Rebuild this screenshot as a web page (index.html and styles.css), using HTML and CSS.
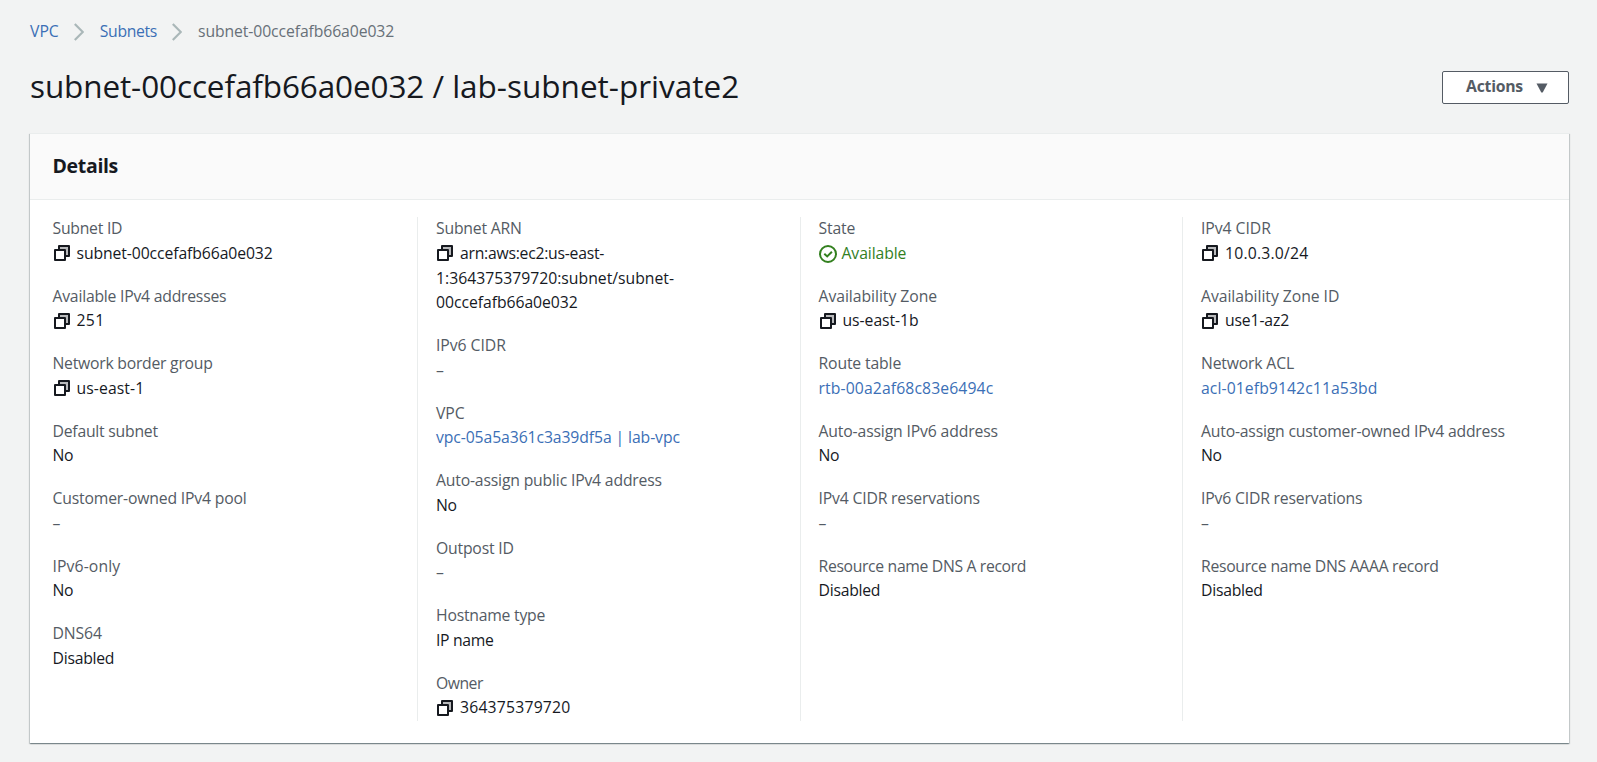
FILE: index.html
```html
<!DOCTYPE html>
<html lang="en">
<head>
<meta charset="utf-8">
<title>Subnet details</title>
<link rel="stylesheet" href="styles.css">
</head>
<body>
<svg class="sprite" aria-hidden="true">
  <symbol id="copy" viewBox="0 0 16 16"><path fill="#b9babc" d="M5 1h10v10h-3.500V4.500H5z"/><path fill="none" stroke="#16191f" stroke-width="2" stroke-linejoin="round" d="M1 5h10v10H1zM5 5V1h10v10h-4"/></symbol>
  <symbol id="check" viewBox="0 0 18 18"><path fill="none" stroke="#33801f" stroke-width="2" d="M9 1a8 8 0 1 1 0 16a8 8 0 1 1 0-16zM5.300 8.700l2.900 2.700 4.700-4.700"/></symbol>
  <symbol id="chevron" viewBox="0 0 10 18"><path fill="none" stroke="#aab7b8" stroke-width="2.200" d="M.8 1L8.800 9l-8 8"/></symbol>
</svg>

<nav class="crumbs">
  <a class="link" href="#">VPC</a>
  <svg class="chevron"><use href="#chevron"/></svg>
  <a class="link t30" href="#">Subnets</a>
  <svg class="chevron"><use href="#chevron"/></svg>
  <span class="current t10">subnet-00ccefafb66a0e032</span>
</nav>

<header class="top">
  <h1><span class="id">subnet-00ccefafb66a0e032</span> / lab-subnet-private2</h1>
  <button class="actions">Actions<svg class="caret" viewBox="0 0 12 10"><path d="M.5 .5h11L6.700 9.500H5.300z"/></svg></button>
</header>

<section class="card">
  <div class="card-head"><h2>Details</h2></div>
  <div class="grid">
    <dl class="col">
      <div><dt class="t25">Subnet ID</dt><dd class="t10"><svg class="copy"><use href="#copy"/></svg>subnet-00ccefafb66a0e032</dd></div>
      <div><dt>Available IPv4 addresses</dt><dd class="p30"><svg class="copy"><use href="#copy"/></svg>251</dd></div>
      <div><dt class="t25">Network border group</dt><dd class="p5"><svg class="copy"><use href="#copy"/></svg>us-east-1</dd></div>
      <div><dt>Default subnet</dt><dd class="t30">No</dd></div>
      <div><dt class="t18">Customer-owned IPv4 pool</dt><dd class="none">–</dd></div>
      <div><dt class="p10">IPv6-only</dt><dd class="t30">No</dd></div>
      <div><dt class="t10">DNS64</dt><dd class="t25">Disabled</dd></div>
    </dl>
    <dl class="col">
      <div><dt class="t20">Subnet ARN</dt><dd><span class="t25"><svg class="copy"><use href="#copy"/></svg>arn:aws:ec2:us-east-</span><br>1:364375379720:subnet/subnet-<br><span class="t5">00ccefafb66a0e032</span></dd></div>
      <div><dt class="t5">IPv6 CIDR</dt><dd class="none">–</dd></div>
      <div><dt class="t5">VPC</dt><dd class="t10"><a class="link" href="#">vpc-05a5a361c3a39df5a | lab-vpc</a></dd></div>
      <div><dt class="t18">Auto-assign public IPv4 address</dt><dd class="t30">No</dd></div>
      <div><dt class="t20">Outpost ID</dt><dd class="none">–</dd></div>
      <div><dt>Hostname type</dt><dd class="t30">IP name</dd></div>
      <div><dt class="t50">Owner</dt><dd class="p18"><svg class="copy"><use href="#copy"/></svg>364375379720</dd></div>
    </dl>
    <dl class="col">
      <div><dt class="t15">State</dt><dd class="ok t10"><svg class="check"><use href="#check"/></svg>Available</dd></div>
      <div><dt class="t5">Availability Zone</dt><dd class="t5"><svg class="copy"><use href="#copy"/></svg>us-east-1b</dd></div>
      <div><dt class="t15">Route table</dt><dd class="p10"><a class="link" href="#">rtb-00a2af68c83e6494c</a></dd></div>
      <div><dt class="t15">Auto-assign IPv6 address</dt><dd class="t30">No</dd></div>
      <div><dt class="t18">IPv4 CIDR reservations</dt><dd class="none">–</dd></div>
      <div><dt class="t30">Resource name DNS A record</dt><dd class="t25">Disabled</dd></div>
    </dl>
    <dl class="col">
      <div><dt class="t5">IPv4 CIDR</dt><dd class="p18"><svg class="copy"><use href="#copy"/></svg>10.0.3.0/24</dd></div>
      <div><dt class="t5">Availability Zone ID</dt><dd class="t15"><svg class="copy"><use href="#copy"/></svg>use1-az2</dd></div>
      <div><dt class="t18">Network ACL</dt><dd class="p5"><a class="link" href="#">acl-01efb9142c11a53bd</a></dd></div>
      <div><dt class="t20">Auto-assign customer-owned IPv4 address</dt><dd class="t30">No</dd></div>
      <div><dt class="t18">IPv6 CIDR reservations</dt><dd class="none">–</dd></div>
      <div><dt class="t28">Resource name DNS AAAA record</dt><dd class="t25">Disabled</dd></div>
    </dl>
  </div>
</section>
</body>
</html>
```
FILE: styles.css
```css
* { box-sizing: border-box; }

body {
  margin: 0;
  padding: 19px 28px 0 30px;
  height: 762px;
  overflow: hidden;
  background: #f2f3f3;
  color: #16191f;
  font: 15.75px/24.75px "Open Sans", "Noto Sans", sans-serif;
}

.sprite { position: absolute; width: 0; height: 0; }

.link { color: #3b6fb6; text-decoration: none; }

.crumbs { display: flex; align-items: center; height: 25px; }
.crumbs .chevron { width: 10px; height: 18px; margin: 1px 16px 0 15px; }
.current { color: #687078; letter-spacing: -.08px; }

.top {
  display: flex;
  justify-content: space-between;
  align-items: flex-start;
  margin-top: 22px;
  height: 67px;
}
h1 {
  margin: 0;
  font-size: 31.5px;
  line-height: 40.5px;
  font-weight: 400;
}
.id { letter-spacing: -.12px; }

.actions {
  display: flex;
  align-items: center;
  justify-content: center;
  width: 127px;
  height: 33px;
  margin: 5px 0 0;
  padding: 0 0 3px 3px;
  border: 1px solid #545b64;
  border-radius: 2px;
  background: #fff;
  color: #545b64;
  font: bold 15.75px/22px "Open Sans", "Noto Sans", sans-serif;
  letter-spacing: -.25px;
}
.caret { width: 12px; height: 10px; margin: 4px 0 0 13px; fill: #545b64; }

.card {
  width: 1539px;
  height: 610px;
  border-top: 1px solid #eaeded;
  background: #fff;
  box-shadow: 0 1px 1px 0 rgba(0, 28, 36, .3), 1px 1px 1px 0 rgba(0, 28, 36, .15), -1px 1px 1px 0 rgba(0, 28, 36, .15);
}
.card-head {
  height: 66px;
  padding: 18px 22.5px 0;
  border-bottom: 1px solid #eaeded;
  background: #fafafa;
}
h2 {
  margin: 0;
  font-size: 19.5px;
  line-height: 27px;
  font-weight: 700;
  letter-spacing: -.33px;
}

.grid {
  display: grid;
  grid-template-columns: repeat(4, 382.5px);
  height: 504px;
  margin: 17px 0 0 4.5px;
}
.col {
  display: flex;
  flex-direction: column;
  gap: 18px;
  margin: 0;
  padding-left: 18px;
}
.col > :first-child { margin-top: -1px; }
.col + .col { border-left: 1px solid #eaeded; }

dt { color: #545b64; letter-spacing: -.23px; }
dd { margin: 0; }
.none { color: #545b64; }
.ok { color: #33801f; }

.copy { width: 16px; height: 16px; margin: 0 7px 0 1px; vertical-align: -2.5px; }
.check { width: 18px; height: 18px; margin-right: 5px; vertical-align: -4.5px; }

/* tracking steps, in hundredths of a pixel: t tightens, p opens */
.t5 { letter-spacing: -.05px; }
.t10 { letter-spacing: -.1px; }
.t15 { letter-spacing: -.15px; }
.t18 { letter-spacing: -.18px; }
.t20 { letter-spacing: -.2px; }
.t25 { letter-spacing: -.25px; }
.t28 { letter-spacing: -.3px; }
.t30 { letter-spacing: -.34px; }
.t50 { letter-spacing: -.5px; }
.p5 { letter-spacing: .08px; }
.p10 { letter-spacing: .11px; }
.p18 { letter-spacing: .2px; }
.p30 { letter-spacing: .35px; }
```
